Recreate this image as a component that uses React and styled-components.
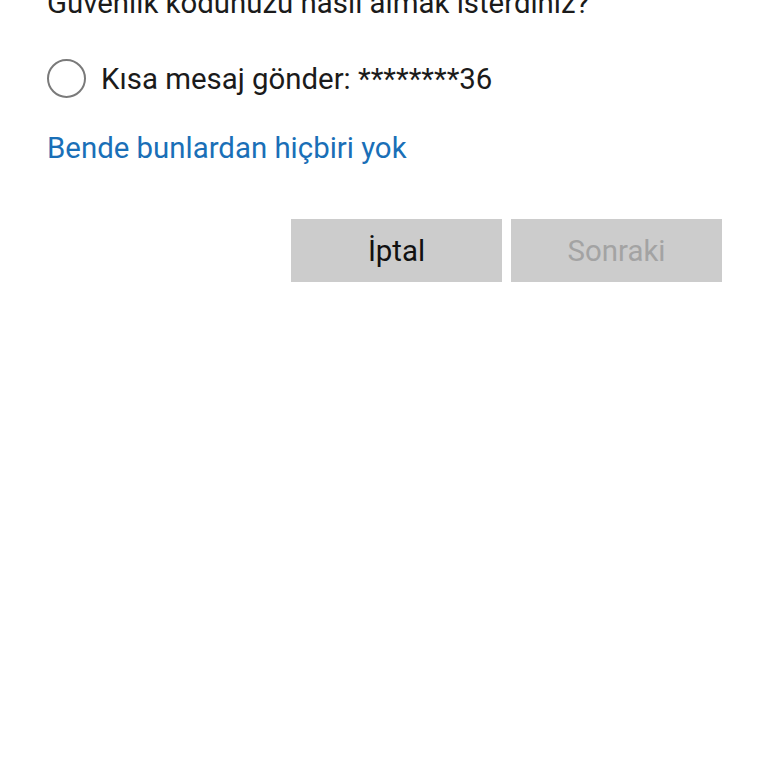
import React from 'react'
import styled, { createGlobalStyle } from 'styled-components'

const GlobalStyle = createGlobalStyle`
  html, body {
    margin: 0;
    padding: 0;
    background: #ffffff;
  }
  body {
    font-family: Roboto, "Noto Sans", "Liberation Sans", sans-serif;
    color: #1b1b1b;
    overflow: hidden;
  }
`

const Page = styled.div`
  width: 768px;
  height: 768px;
  padding: 0 46px 0 47px;
  box-sizing: border-box;
  display: flex;
  flex-direction: column;
  font-size: 29.4px;
  line-height: 34px;
`

// the question is scrolled half out of view in the original
const Heading = styled.div`
  margin-top: -14px;
  white-space: nowrap;
`

const Option = styled.label`
  margin-top: 39px;
  display: flex;
  align-items: center;
  gap: 15px;
  cursor: pointer;
`

const Radio = styled.span`
  width: 39px;
  height: 39px;
  border: 2px solid #7a7a7a;
  border-radius: 50%;
  box-sizing: border-box;
  flex: none;
`

const Link = styled.a`
  margin-top: 33px;
  color: #1a6fb7;
  text-decoration: none;
  align-self: flex-start;
`

const Actions = styled.div`
  margin-top: 54px;
  display: flex;
  justify-content: flex-end;
  gap: 9px;
`

const Button = styled.button`
  width: 211px;
  height: 63px;
  border: none;
  background: #cccccc;
  font-family: inherit;
  font-size: 29.4px;
  color: ${(p) => (p.disabled ? '#a3a3a3' : '#111111')};
  padding: 0;
`

export default function App() {
  return (
    <>
      <GlobalStyle />
      <Page>
        <Heading>Güvenlik kodunuzu nasıl almak isterdiniz?</Heading>
        <Option>
          <Radio />
          <span>Kısa mesaj gönder: ********36</span>
        </Option>
        <Link href="#">Bende bunlardan hiçbiri yok</Link>
        <Actions>
          <Button>İptal</Button>
          <Button disabled>Sonraki</Button>
        </Actions>
      </Page>
    </>
  )
}
